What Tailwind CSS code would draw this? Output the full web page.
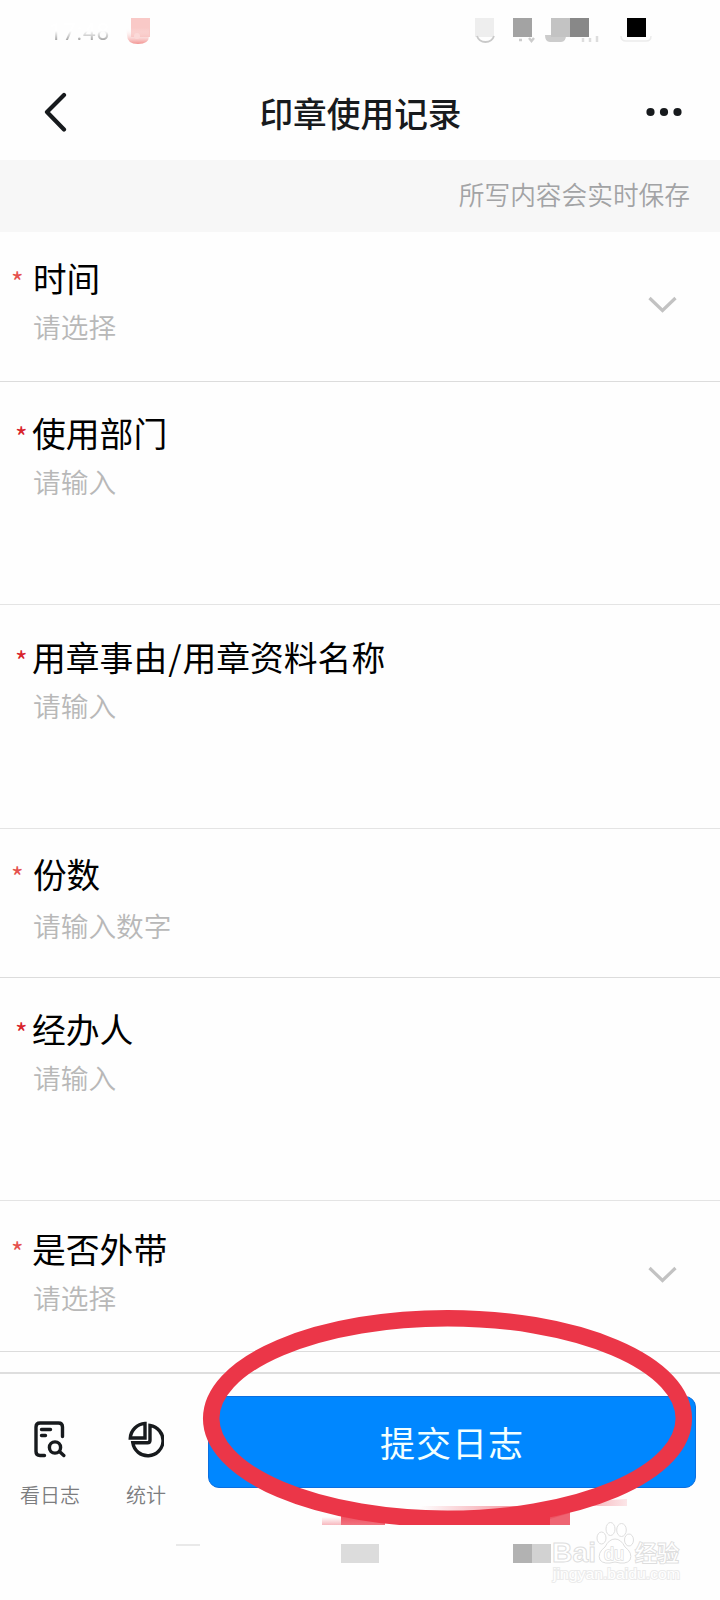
<!DOCTYPE html>
<html lang="zh-CN">

<head>
  <meta charset="UTF-8" />
  <meta name="viewport" content="width=device-width, initial-scale=1.0" />
  <title>印章使用记录</title>
  <script src="https://cdn.jsdelivr.net/npm/@tailwindcss/browser@4"></script>
</head>

<body class="relative w-[720px] h-[1600px] overflow-hidden bg-[#fefefe] font-['Noto_Sans_CJK_SC',sans-serif]">
  <!-- Status bar -->
  <div class="relative h-[63px]">
    <div class="absolute left-[49px] top-[23px] h-[20px] text-[23px] leading-[20px] tracking-[0.800px] font-['Roboto',sans-serif] text-transparent bg-clip-text bg-linear-to-b from-white from-40% to-[#8c8c8c]">17:48</div>
    <svg class="absolute left-0 top-0" width="720" height="63" viewBox="0 0 720 63">
      <defs>
        <linearGradient id="app" x1="0" y1="0" x2="0" y2="1">
          <stop offset="0" stop-color="#fff" stop-opacity="0" />
          <stop offset="1" stop-color="#f29391" />
        </linearGradient>
      </defs>
      <rect x="131" y="18" width="19" height="19" fill="#f9c9c7" />
      <path d="M126 28H149V36Q149 44 138 44Q127 44 127 35Z" fill="url(#app)" />
      <circle cx="137" cy="36" r="3" fill="#fbd9d8" />
      <rect x="475" y="18" width="19" height="19" fill="#eee" />
      <path d="M477 36Q479 42 485.500 42Q492 42 494 36" fill="none" stroke="#c9c9c9" stroke-width="1.800" />
      <rect x="513" y="18" width="19" height="19" fill="#a3a3a3" />
      <path d="M519 40h3M529 38l2.500 3 2.500-3" fill="none" stroke="#ccc" stroke-width="2.500" />
      <path d="M545 35H566Q566 42 561 42H550Q545 42 545 35Z" fill="#ccc" />
      <rect x="551" y="18" width="19" height="19" fill="#c3c3c3" />
      <rect x="570" y="18" width="19" height="19" fill="#888" />
      <path d="M583 38v4M590 38v4M597 36v6" stroke="#ddd" stroke-width="2.500" />
      <path d="M621 36Q621 41 626 41H646Q651 41 651 36" fill="none" stroke="#ececec" stroke-width="1.500" />
      <rect x="627" y="18" width="19" height="19" fill="#000" />
    </svg>
  </div>

  <!-- Nav bar -->
  <header class="flex h-[97px] items-center justify-between pl-[44px] pr-[38px] text-[#171a1d]">
    <svg width="24" height="40" viewBox="0 0 24 40" fill="none" stroke="currentColor" stroke-width="4.200" stroke-linecap="round" stroke-linejoin="round">
      <path d="M20 3L3 20L20 37.500" />
    </svg>
    <h1 class="pl-[7px] pt-[2px] text-[33.700px] font-medium leading-[40px]">印章使用记录</h1>
    <svg width="36" height="10" viewBox="0 0 36 10" fill="currentColor">
      <circle cx="4.500" cy="5" r="4.100" />
      <circle cx="18" cy="5" r="4.100" />
      <circle cx="31.500" cy="5" r="4.100" />
    </svg>
  </header>

  <div class="flex h-[72px] items-center justify-end bg-[#f7f7f7] pb-[3px] pr-[30px] text-[25.700px] font-[350] text-[#a2a3a5]">所写内容会实时保存</div>

  <!-- Form -->
  <main class="text-black">
    <section class="flex h-[150px] items-center border-b border-[#dcdcdc] pr-[43px]">
      <div class="flex-1 pb-[9px]">
        <div class="flex items-center text-[33.600px] leading-[49px]"><span class="w-[33px] shrink-0 pl-[11px] pt-[7px] text-[27px] leading-none text-[#e5524f]">*</span>时间</div>
        <div class="pl-[33px] text-[27.700px] font-[350] leading-[49px] text-[#b8b8b8]">请选择</div>
      </div>
      <svg class="mb-[4px]" width="29" height="18" viewBox="0 0 29 18" fill="none" stroke="#c2c2c2" stroke-width="3.200">
        <path d="M1.500 2L14.500 14.500L27.500 2" />
      </svg>
    </section>

    <section class="h-[223px] border-b border-[#e4e4e4] pt-[27px]">
      <div class="flex items-center text-[33.800px] leading-[48px]"><span class="w-[32px] shrink-0 pl-[15px] pt-[6px] text-[27px] leading-none text-[#d8242c]">*</span>使用部门</div>
      <div class="pl-[33px] text-[27.700px] font-[350] leading-[48px] text-[#b8b8b8]">请输入</div>
    </section>

    <section class="h-[224px] border-b border-[#e4e4e4] pt-[28px]">
      <div class="flex items-center text-[33.800px] leading-[48px]"><span class="w-[32px] shrink-0 pl-[15px] pt-[6px] text-[27px] leading-none text-[#d8242c]">*</span>用章事由<span class="px-[1px]">/</span>用章资料名称</div>
      <div class="pl-[33px] text-[27.700px] font-[350] leading-[48px] text-[#b8b8b8]">请输入</div>
    </section>

    <section class="h-[149px] border-b border-[#dcdcdc] pt-[20px]">
      <div class="flex items-center text-[33.600px] leading-[49px]"><span class="w-[33px] shrink-0 pl-[11px] pt-[6px] text-[27px] leading-none text-[#e5524f]">*</span>份数</div>
      <div class="pl-[33px] text-[27.700px] font-[350] leading-[54px] text-[#b8b8b8]">请输入数字</div>
    </section>

    <section class="h-[223px] border-b border-[#e4e4e4] pt-[27px]">
      <div class="flex items-center text-[33.800px] leading-[48px]"><span class="w-[32px] shrink-0 pl-[15px] pt-[6px] text-[27px] leading-none text-[#d8242c]">*</span>经办人</div>
      <div class="pl-[33px] text-[27.700px] font-[350] leading-[48px] text-[#b8b8b8]">请输入</div>
    </section>

    <section class="flex h-[151px] items-center border-b border-[#dcdcdc] pr-[43px]">
      <div class="flex-1 pb-[7px]">
        <div class="flex items-center text-[33.800px] leading-[49px]"><span class="w-[32px] shrink-0 pl-[11px] pt-[6px] text-[27px] leading-none text-[#e5524f]">*</span>是否外带</div>
        <div class="pl-[33px] text-[27.700px] font-[350] leading-[49px] text-[#b8b8b8]">请选择</div>
      </div>
      <svg class="mb-[3px]" width="29" height="18" viewBox="0 0 29 18" fill="none" stroke="#c2c2c2" stroke-width="3.200">
        <path d="M1.500 2L14.500 14.500L27.500 2" />
      </svg>
    </section>
  </main>

  <!-- Bottom actions -->
  <footer class="mt-[20px] flex border-t-2 border-[#dedede] pl-[20px] pt-[22px]">
    <div class="flex w-[60px] flex-col items-center pt-[25px] text-[#171a1d]">
      <svg width="32" height="37" viewBox="0 0 32 37" fill="none" stroke="currentColor" stroke-width="3.400" stroke-linecap="round" stroke-linejoin="round">
        <path d="M10.500 34.500H6Q2 34.500 2 30.500V6Q2 2 6 2H24.500Q28.500 2 28.500 6V15.500M7.500 8.500H16.500M7.500 14.500H11.500" />
        <circle cx="21" cy="26.500" r="5.600" />
        <path d="M25.500 30.500L29.800 34.500" />
      </svg>
      <span class="mt-[22px] text-[20px] font-[350] leading-[30px] text-[#7c7d7f]">看日志</span>
    </div>
    <div class="ml-[46px] flex w-[40px] flex-col items-center pt-[25px] text-[#171a1d]">
      <svg width="36" height="37" viewBox="0 0 36 37" fill="none" stroke="currentColor" stroke-width="3.400">
        <path d="M17 2.500V17H2.300A15.500 15.500 0 0 1 17 2.500Z" />
        <path d="M22 4.500A15.200 15.200 0 1 1 4.800 21.800H19.500Q22 21.800 22 19.300Z" />
      </svg>
      <span class="mt-[22px] text-[20px] font-[350] leading-[30px] text-[#7c7d7f]">统计</span>
    </div>
    <button class="ml-[42px] h-[92px] w-[488px] rounded-[11px] border border-[#0b6fe0] bg-[#0087ff] pt-[1px] text-[35px] tracking-[1px] text-[#f2ffff]">提交日志</button>
  </footer>

  <!-- Marker ring drawn over the submit button, and leftover blocks at the bottom edge -->
  <svg class="absolute left-0 top-[1290px]" width="720" height="310" viewBox="0 1290 720 310">
    <defs>
      <linearGradient id="fadeUp" x1="0" y1="0" x2="0" y2="1">
        <stop offset="0" stop-color="#eb3648" stop-opacity="0" />
        <stop offset="1" stop-color="#eb3648" stop-opacity=".35" />
      </linearGradient>
      <linearGradient id="fadeCorner" x1="0" y1="0" x2="0" y2="1">
        <stop offset="0" stop-color="#eb3648" stop-opacity=".9" />
        <stop offset="1" stop-color="#eb3648" stop-opacity=".7" />
      </linearGradient>
      <linearGradient id="fadeRight">
        <stop offset="0" stop-color="#eb3648" stop-opacity=".5" />
        <stop offset="1" stop-color="#eb3648" stop-opacity=".12" />
      </linearGradient>
      <linearGradient id="sliver">
        <stop offset="0" stop-color="#eb3648" stop-opacity="0" />
        <stop offset="1" stop-color="#eb3648" stop-opacity=".7" />
      </linearGradient>
      <clipPath id="cut">
        <rect x="0" y="1290" width="720" height="235" />
      </clipPath>
    </defs>
    <path d="M322 1517H341V1525H322Z" fill="url(#fadeUp)" />
    <path d="M341 1514H385V1525H341Z" fill="url(#fadeCorner)" />
    <rect x="550" y="1506" width="20" height="19" fill="#ec5363" />
    <path d="M550 1519L570 1513V1525H550Z" fill="#ee6573" />
    <path d="M570 1502L627 1499V1506H570Z" fill="url(#fadeRight)" />
    <g clip-path="url(#cut)">
      <ellipse cx="447.500" cy="1418.500" rx="236.300" ry="100.300" fill="none" stroke="#eb3648" stroke-width="16.500" />
    </g>
    <path d="M440 1511Q510 1511 550 1505V1525H440Z" fill="#eb3648" />
    <rect x="420" y="1506" width="130" height="4" fill="url(#sliver)" />
    <rect x="176" y="1544" width="24" height="2" fill="#e9e9e9" />
    <rect x="341" y="1544" width="38" height="19" fill="#dcdcdc" />
    <rect x="513" y="1544" width="19" height="19" fill="#b2b2b2" />
    <rect x="532" y="1544" width="19" height="19" fill="#d2d2d2" />

    <!-- Watermark -->
    <g fill="#fff" stroke="#dedede" stroke-width="1">
      <text x="552" y="1562" font-family="Liberation Sans, sans-serif" font-size="28" font-weight="bold" textLength="44" lengthAdjust="spacingAndGlyphs">Bai</text>
      <ellipse cx="601.500" cy="1538" rx="4.500" ry="6" />
      <ellipse cx="610.500" cy="1529" rx="4.500" ry="6.500" />
      <ellipse cx="621.500" cy="1530" rx="4.800" ry="6.500" />
      <ellipse cx="629" cy="1540" rx="4.500" ry="6" />
      <path d="M615 1539Q621 1539 625 1547Q633 1553 630 1560Q626 1565 615 1562Q604 1565 600 1560Q597 1553 605 1547Q609 1539 615 1539Z" />
      <text x="604" y="1560" font-family="Liberation Sans, sans-serif" font-size="18" stroke-width="1.400" paint-order="stroke">du</text>
      <text x="635" y="1561" font-family="Noto Sans CJK SC, sans-serif" font-size="22" stroke-width="2" paint-order="stroke">经验</text>
      <text x="553" y="1579" font-family="Liberation Sans, sans-serif" font-size="14" stroke="#ebebeb" stroke-width="1.800" paint-order="stroke" textLength="127" lengthAdjust="spacingAndGlyphs">jingyan.baidu.com</text>
    </g>
  </svg>
</body>

</html>
